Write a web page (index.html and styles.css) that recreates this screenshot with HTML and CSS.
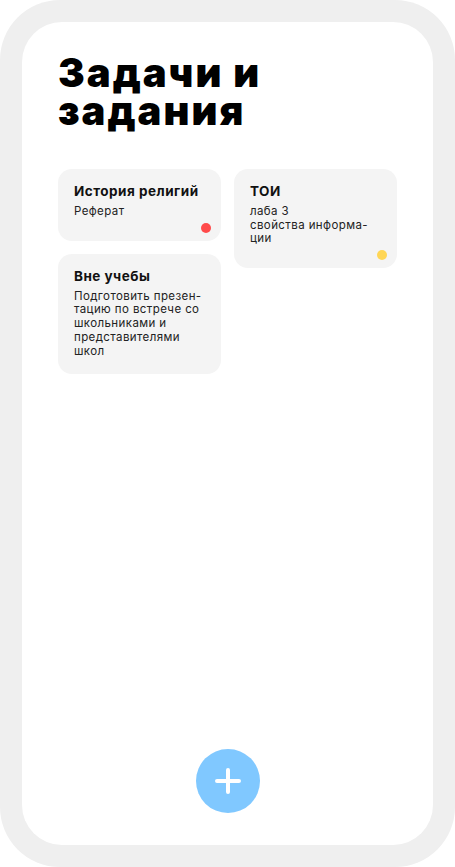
FILE: index.html
```html
<!DOCTYPE html>
<html lang="ru">
<head>
<meta charset="utf-8">
<title>Задачи и задания</title>
<link rel="stylesheet" href="styles.css">
</head>
<body>
<div class="phone">
  <main class="screen">
    <h1 class="title">Задачи и<br>задания</h1>
    <section class="board">
      <div class="column">
        <article class="card">
          <h2 class="card-title">История религий</h2>
          <p class="card-text">Реферат</p>
          <span class="dot dot-red"></span>
        </article>
        <article class="card card-plain">
          <h2 class="card-title">Вне учебы</h2>
          <p class="card-text">Подготовить презен-<br>тацию по встрече со<br>школьниками и<br>представителями<br>школ</p>
        </article>
      </div>
      <div class="column">
        <article class="card">
          <h2 class="card-title">ТОИ</h2>
          <p class="card-text">лаба 3<br>свойства информа-<br>ции</p>
          <span class="dot dot-yellow"></span>
        </article>
      </div>
    </section>
    <button class="fab" aria-label="Добавить">
      <svg width="26" height="26" viewBox="0 0 26 26"><path d="M13 2v22M2 13h22" stroke="#fff" stroke-width="4" stroke-linecap="round"/></svg>
    </button>
  </main>
</div>
</body>
</html>
```
FILE: styles.css
```css
* { box-sizing: border-box; }
html, body { margin: 0; padding: 0; background: #fff; }
body { font-family: "Inter", "Noto Sans", sans-serif; color: #000; }
.phone {
  width: 455px;
  height: 867px;
  background: #efefef;
  border-radius: 60px;
  padding: 22px;
}
.screen {
  height: 100%;
  background: #fff;
  border-radius: 40px;
  padding: 32px 36px 32px 36px;
  display: flex;
  flex-direction: column;
}
.title {
  margin: 0;
  font-size: 40px;
  line-height: 38px;
  font-weight: 900;
  letter-spacing: 2px;
}
.board {
  margin-top: 39px;
  display: flex;
  gap: 13px;
  align-items: flex-start;
}
.column {
  flex: 1;
  display: flex;
  flex-direction: column;
  gap: 13px;
}
.card {
  background: #f4f4f4;
  border-radius: 14px;
  padding: 13px 10px 8px 16px;
  display: flex;
  flex-direction: column;
}
.card-plain { padding-bottom: 16px; }
.card-title {
  margin: 0;
  font-size: 13.5px;
  line-height: 18px;
  font-weight: 700;
  color: #111;
  letter-spacing: 0.5px;
}
.card-text {
  margin: 5px 0 0;
  font-size: 11.5px;
  line-height: 13.7px;
  color: #222;
  letter-spacing: 0.4px;
}
.dot {
  align-self: flex-end;
  width: 10px;
  height: 10px;
  border-radius: 50%;
  margin-top: 4px;
}
.dot-red { background: #ff4a4a; }
.dot-yellow { background: #ffd655; }
.fab {
  margin: auto auto 0;
  width: 64px;
  height: 64px;
  border-radius: 50%;
  border: none;
  background: #80c8ff;
  display: flex;
  align-items: center;
  justify-content: center;
  padding: 0;
}
```
